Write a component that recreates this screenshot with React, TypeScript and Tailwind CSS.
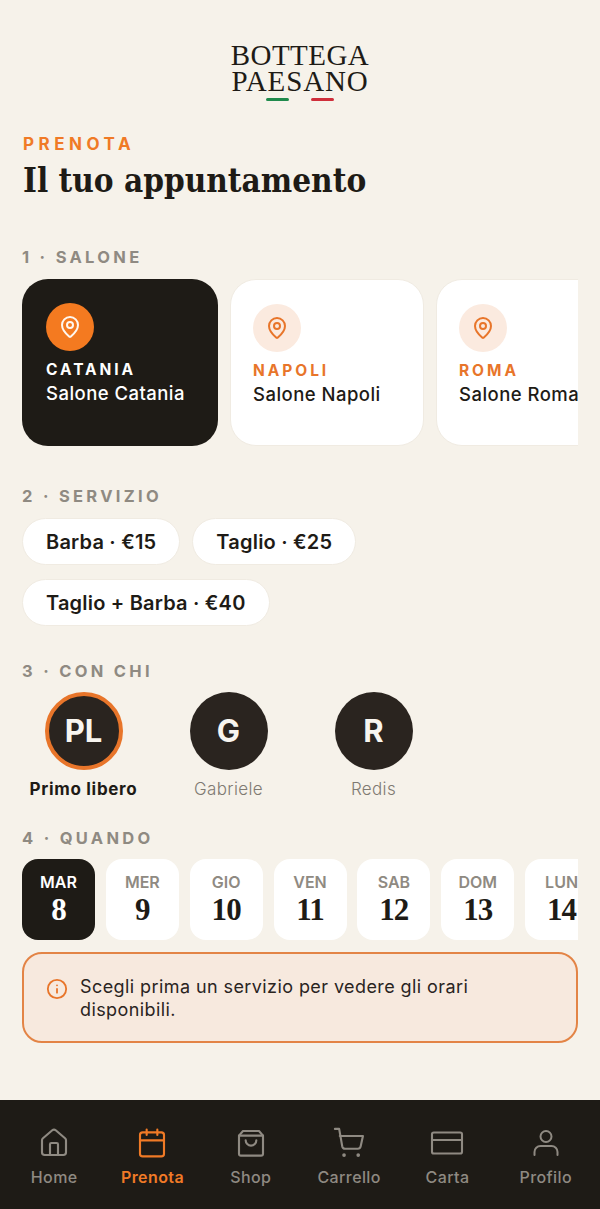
import React from "react";

const sans = "font-['Inter','Liberation_Sans',sans-serif]";

function Pin({ color }: { color: string }) {
  return (
    <svg width="24" height="24" viewBox="0 0 24 24" fill="none" stroke={color} strokeWidth="2" strokeLinecap="round" strokeLinejoin="round">
      <path d="M20 10c0 4.993-5.539 10.193-7.399 11.799a1 1 0 0 1-1.202 0C9.539 20.193 4 14.993 4 10a8 8 0 0 1 16 0" />
      <circle cx="12" cy="10" r="3" />
    </svg>
  );
}

function Label({ children, className = "" }: { children: React.ReactNode; className?: string }) {
  return <div className={`text-[16.5px] leading-[20px] font-bold tracking-[0.2em] text-[#8f8a82] ${className}`}>{children}</div>;
}

function SalonCard({ city, name, active, w }: { city: string; name: string; active?: boolean; w: string }) {
  return (
    <div className={`${w} h-[167px] shrink-0 rounded-[26px] pt-[24px] ${active ? "bg-[#1e1b16] px-[24px]" : "bg-white border border-[#f0ebe2] pt-[23px] px-[22px]"}`}>
      <div className={`w-[48px] h-[48px] rounded-full flex items-center justify-center ${active ? "bg-[#f47a20]" : "bg-[#fbeadf]"}`}>
        <Pin color={active ? "#fff7ef" : "#e8752a"} />
      </div>
      <div className={`mt-[9px] text-[15.5px] leading-[20px] font-bold tracking-[0.19em] ${active ? "text-white" : "text-[#e8752a]"}`}>{city}</div>
      <div className={`mt-[1px] text-[18.5px] leading-[24px] font-medium tracking-[0.025em] whitespace-nowrap ${active ? "text-white" : "text-[#1e1b16]"}`}>{name}</div>
    </div>
  );
}

function Chip({ children }: { children: React.ReactNode }) {
  return <div className="h-[47px] rounded-full bg-white border border-[#f0ebe2] px-[23px] flex items-center text-[20px] font-semibold tracking-[0.01em] text-[#1e1b16] whitespace-nowrap">{children}</div>;
}

function Person({ initials, name, active }: { initials: string; name: string; active?: boolean }) {
  return (
    <div className="w-[145px] flex flex-col items-center shrink-0">
      <div className={`w-[78px] h-[78px] rounded-full bg-[#2a241f] flex items-center justify-center text-[#f8f5ef] text-[31px] font-bold ${active ? "border-[4px] border-[#e8752a]" : ""}`}>{initials}</div>
      <div className={`mt-[9px] text-[17px] leading-[20px] ${active ? "font-bold tracking-[0.04em] text-[#1e1b16]" : "font-light tracking-[0.02em] text-[#7f7a72]"}`}>{name}</div>
    </div>
  );
}

function DateCard({ d, n, active }: { d: string; n: string; active?: boolean }) {
  return (
    <div className={`w-[73px] h-[81px] shrink-0 rounded-[16px] flex flex-col items-center pt-[14px] ${active ? "bg-[#1e1b16]" : "bg-white"}`}>
      <div className={`text-[16px] leading-[18px] font-semibold ${active ? "text-white" : "text-[#8f8a82]"}`}>{d}</div>
      <div className={`mt-[2px] font-['Liberation_Serif',serif] text-[31px] leading-[34px] font-bold tracking-[-0.03em] ${active ? "text-white" : "text-[#1e1b16]"}`}>{n}</div>
    </div>
  );
}

function NavItem({ icon, label, active }: { icon: React.ReactNode; label: string; active?: boolean }) {
  return (
    <div className={`flex-1 flex flex-col items-center ${active ? "text-[#f07a26]" : "text-[#8f8a82]"}`}>
      <div className="h-[32px] flex items-center justify-center">{icon}</div>
      <div className={`mt-[8px] text-[16px] leading-[20px] tracking-[0.025em] ${active ? "font-semibold" : "font-medium"}`}>{label}</div>
    </div>
  );
}

const ic = { fill: "none", stroke: "currentColor", strokeWidth: 2, strokeLinecap: "round" as const, strokeLinejoin: "round" as const };

export default function App() {
  return (
    <div className={`w-[600px] h-[1209px] bg-[#f6f2ea] flex flex-col overflow-hidden ${sans}`}>
      <div className="flex-1 min-h-0 px-[22px]">
        <div className="pt-[42px] flex flex-col items-center">
          <div className="font-['Liberation_Serif',serif] text-[29px] leading-[26px] text-[#1e1b16] text-center">
            <span className="tracking-[0.015em]">BOTTEGA</span><br /><span className="tracking-[0.03em]">PAESANO</span>
          </div>
          <div className="mt-[4px] flex gap-[22px] -ml-px">
            <div className="w-[23px] h-[3px] rounded-full bg-[#1f8a4c]" />
            <div className="w-[23px] h-[3px] rounded-full bg-[#cf2e3a]" />
          </div>
        </div>

        <div className="mt-[33px] text-[17px] leading-[20px] font-bold tracking-[0.265em] text-[#f07a26] ml-px">PRENOTA</div>
        <h1 className="mt-[5px] font-['DejaVu_Serif_Condensed','DejaVu_Serif',serif] text-[33px] leading-[44px] font-bold text-[#1e1b16] ml-px">Il tuo appuntamento</h1>

        <Label className="mt-[44px]">1 · SALONE</Label>
        <div className="mt-[12px] flex gap-[12px] overflow-hidden">
          <SalonCard active city="CATANIA" name="Salone Catania" w="w-[196px]" />
          <SalonCard city="NAPOLI" name="Salone Napoli" w="w-[194px]" />
          <SalonCard city="ROMA" name="Salone Roma" w="w-[194px]" />
        </div>

        <Label className="mt-[40px]">2 · SERVIZIO</Label>
        <div className="mt-[12px] flex flex-wrap gap-x-[12px] gap-y-[14px]">
          <Chip>Barba · €15</Chip>
          <Chip>Taglio · €25</Chip>
          <Chip>Taglio + Barba · €40</Chip>
        </div>

        <Label className="mt-[35px]">3 · CON CHI</Label>
        <div className="mt-[11px] flex -ml-[11px]">
          <Person active initials="PL" name="Primo libero" />
          <Person initials="G" name="Gabriele" />
          <Person initials="R" name="Redis" />
        </div>

        <Label className="mt-[29px]">4 · QUANDO</Label>
        <div className="mt-[11px] flex gap-[10.85px] overflow-hidden">
          <DateCard active d="MAR" n="8" />
          <DateCard d="MER" n="9" />
          <DateCard d="GIO" n="10" />
          <DateCard d="VEN" n="11" />
          <DateCard d="SAB" n="12" />
          <DateCard d="DOM" n="13" />
          <DateCard d="LUN" n="14" />
        </div>

        <div className="mt-[12px] h-[91px] rounded-[20px] border-2 border-[#e38446] bg-[#f7e9de] px-[22px] flex items-start pt-[21px] gap-[12px]">
          <svg className="mt-[3px] shrink-0 text-[#e8752a]" width="22" height="22" viewBox="0 0 24 24" {...ic}>
            <circle cx="12" cy="12" r="10" />
            <path d="M12 16v-4" />
            <path d="M12 8h.01" />
          </svg>
          <div className="text-[18px] leading-[23px] tracking-[0.023em] font-normal text-[#2a241f]">Scegli prima un servizio per vedere gli orari disponibili.</div>
        </div>
      </div>

      <nav className="h-[109px] shrink-0 bg-[#1e1b16] px-[5px] pt-[27px] flex">
        <NavItem label="Home" icon={
          <svg width="32" height="32" viewBox="0 0 24 24" {...ic} strokeWidth={1.6}>
            <path d="M15 21v-8a1 1 0 0 0-1-1h-4a1 1 0 0 0-1 1v8" />
            <path d="M3 10a2 2 0 0 1 .709-1.528l7-5.999a2 2 0 0 1 2.582 0l7 5.999A2 2 0 0 1 21 10v9a2 2 0 0 1-2 2H5a2 2 0 0 1-2-2z" />
          </svg>} />
        <NavItem active label="Prenota" icon={
          <svg width="32" height="32" viewBox="0 0 24 24" {...ic} strokeWidth={1.6}>
            <path d="M8 2v4" /><path d="M16 2v4" />
            <rect width="18" height="18" x="3" y="4" rx="2" />
            <path d="M3 10h18" />
          </svg>} />
        <NavItem label="Shop" icon={
          <svg width="32" height="32" viewBox="0 0 24 24" {...ic} strokeWidth={1.6}>
            <path d="M6 3h12l3 3.5V20a1.5 1.5 0 0 1-1.5 1.5h-15A1.5 1.5 0 0 1 3 20V6.5z" />
            <path d="M3 6.5h18" />
            <path d="M16 10a4 4 0 0 1-8 0" />
          </svg>} />
        <NavItem label="Carrello" icon={
          <svg width="34" height="34" viewBox="0 0 24 24" {...ic} strokeWidth={1.5}>
            <circle cx="8.5" cy="20.5" r="1.3" fill="currentColor" stroke="none" />
            <circle cx="18.5" cy="20.5" r="1.3" fill="currentColor" stroke="none" />
            <path d="M2.05 2.05h3l2.2 12.42a2 2 0 0 0 2 1.58h9a2 2 0 0 0 1.95-1.57l1.65-7.43H5.5" />
          </svg>} />
        <NavItem label="Carta" icon={
          <svg width="36" height="36" viewBox="0 0 24 24" {...ic} strokeWidth={1.4}>
            <rect width="20" height="14" x="2" y="5" rx="1.2" />
            <path d="M2 10h20" />
          </svg>} />
        <NavItem label="Profilo" icon={
          <svg width="32" height="32" viewBox="0 0 32 32" {...ic}>
            <path d="M4.5 28v-3a6 6 0 0 1 6-6h11a6 6 0 0 1 6 6v3" />
            <circle cx="16" cy="9.5" r="5.5" />
          </svg>} />
      </nav>
    </div>
  );
}
